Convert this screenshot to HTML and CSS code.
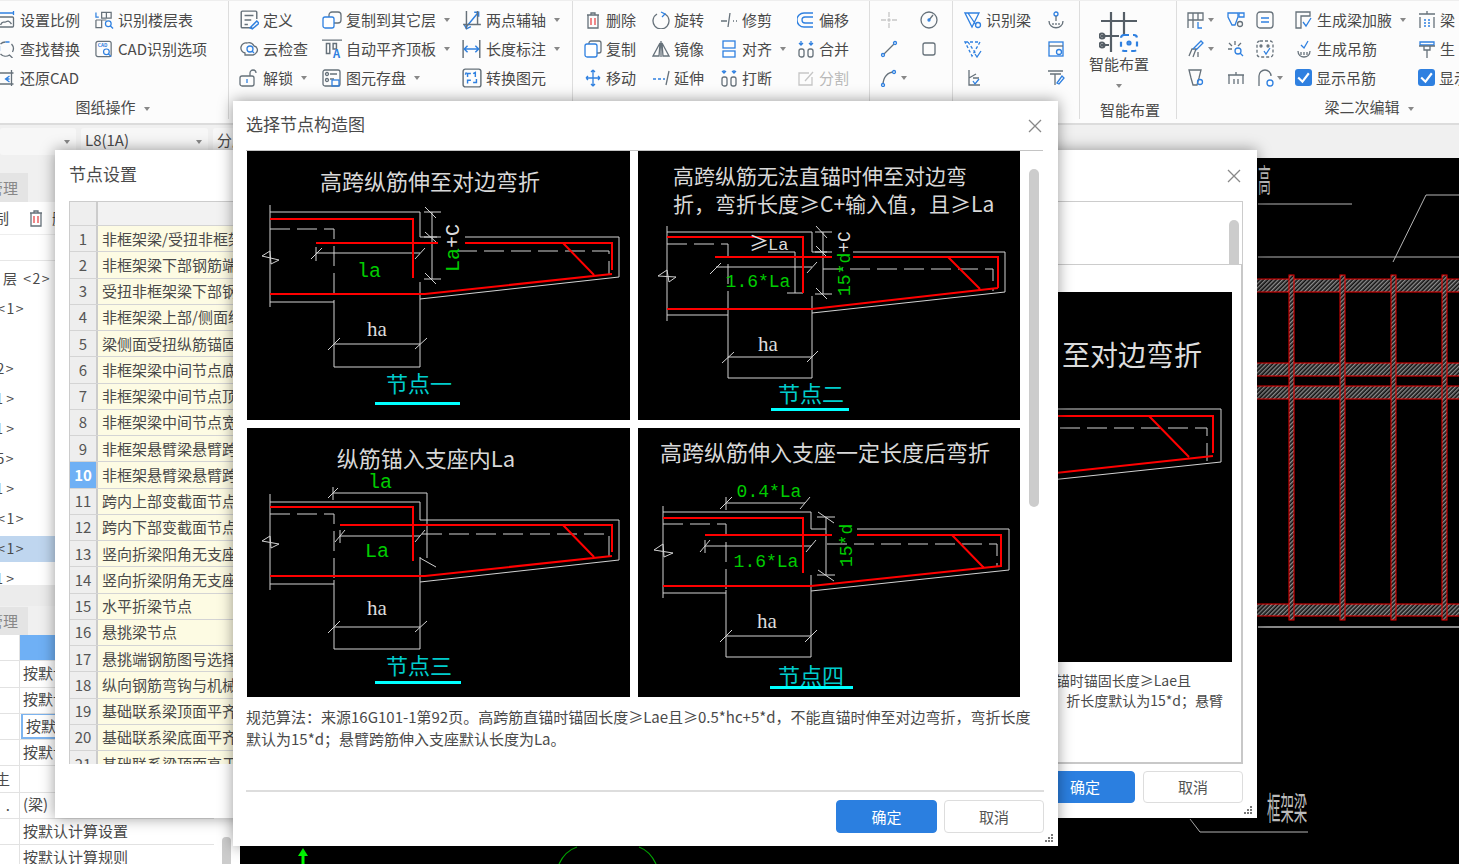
FILE: index.html
```html
<!DOCTYPE html>
<html lang="zh-CN">
<head>
  <meta charset="UTF-8">
  <title>选择节点构造图</title>
  <link rel="stylesheet" href="styles.css">
</head>
<body>
  <div class="ribbon">
    <div class="group g1">
      <div class="tools">
        <div class="tool"><svg class="ic" viewBox="0 0 18 18"><path class="b" d="M1 2h15M1 0v4M16 0v4"/><rect x="1" y="6" width="15" height="10" rx="1"/><path d="M3 14c2-5 3-2 5-3s3-2 6 2"/></svg><span>设置比例</span></div>
        <div class="tool"><svg class="ic" viewBox="0 0 18 18"><path d="M3 4a7 7 0 0 1 5-2M14 4a7 7 0 0 1 1 8M3 14a7 7 0 0 0 9 1l3 3"/><path class="b" d="M8 2h4M2 6v5"/></svg><span>查找替换</span></div>
        <div class="tool"><svg class="ic" viewBox="0 0 18 18"><path d="M0 4h16M0 15h16M14 1v16"/><path class="b" d="M12 7l-4 3 4 3M8 10h4"/></svg><span>还原CAD</span></div>
        <div class="tool"><svg class="ic" viewBox="0 0 20 18"><path class="b" d="M1 1v5h3"/><path d="M7 1h10v6H7zM12 1v6M1 9h11M1 9v8h6V9"/><circle class="b" cx="14" cy="13" r="3"/><path class="b" d="M16 15l3 3"/></svg><span>识别楼层表</span></div>
        <div class="tool"><svg class="ic" viewBox="0 0 20 18"><rect x="1" y="1" width="16" height="16" rx="2"/><text class="ic-text" x="3" y="7">CAD</text><circle class="b" cx="12" cy="12" r="3"/><path class="b" d="M14 14l3 3"/></svg><span>CAD识别选项</span></div>
      </div>
      <div class="group-label">图纸操作<i class="caret"></i></div>
    </div>

    <div class="group g2">
      <div class="tools">
        <div class="tool"><svg class="ic" viewBox="0 0 18 18"><path d="M12 16H3a1 1 0 0 1-1-1V2a1 1 0 0 1 1-1h12a1 1 0 0 1 1 1v6M5 5h8M5 9h6M5 13h3"/><path class="b" d="M10 16l6-6 2 2-6 5z"/></svg><span>定义</span></div>
        <div class="tool"><svg class="ic" viewBox="0 0 20 18"><rect x="7" y="1" width="12" height="11" rx="3"/><rect class="b blue-fill" x="1" y="6" width="11" height="11" rx="2"/></svg><span>复制到其它层</span><i class="caret"></i></div>
        <div class="tool"><svg class="ic" viewBox="0 0 18 18"><path class="b" d="M4 15L14 3M2 13l2 4 4-2M11 2l4 0 0 4"/><path d="M4 1v16M1 13h16M14 1v12"/></svg><span>两点辅轴</span><i class="caret"></i></div>
        <div class="tool"><svg class="ic" viewBox="0 0 20 18"><path d="M6 13a5 5 0 0 1 2-10 6 6 0 0 1 7 3 4 4 0 0 1 2 7 5 5 0 0 1-3 2H6z"/><circle class="b" cx="11" cy="9" r="3"/><path class="b" d="M13 11l2 2"/></svg><span>云检查</span></div>
        <div class="tool"><svg class="ic" viewBox="0 0 18 18"><path d="M0 1h18M4 4v9h3V4zM10 4v5h3V4z"/><text class="ic-letter" x="10" y="17">A</text></svg><span>自动平齐顶板</span><i class="caret"></i></div>
        <div class="tool"><svg class="ic" viewBox="0 0 18 18"><path d="M1 1v16M16 1v16"/><path class="b" d="M2 9h13M5 6L2 9l3 3M12 6l3 3-3 3"/></svg><span>长度标注</span><i class="caret"></i></div>
        <div class="tool"><svg class="ic" viewBox="0 0 20 18"><rect x="1" y="7" width="14" height="10" rx="2"/><path d="M11 7V4a3 3 0 0 1 6 0"/><path class="b" d="M8 10v4"/></svg><span>解锁</span><i class="caret"></i></div>
        <div class="tool"><svg class="ic" viewBox="0 0 20 18"><rect x="1" y="1" width="17" height="16" rx="2"/><circle cx="5" cy="5" r="1.5"/><circle cx="5" cy="11" r="1.5"/><path d="M8 5h7M8 10h4"/><rect class="b" x="10" y="11" width="7" height="6"/></svg><span>图元存盘</span><i class="caret"></i></div>
        <div class="tool"><svg class="ic" viewBox="0 0 18 18"><rect x="1" y="1" width="16" height="16" rx="2"/><path class="b" d="M5 8V5h3M4 4l-1 2M10 5l2-1v4M8 11H5v3M13 10v3h-3"/></svg><span>转换图元</span></div>
      </div>
    </div>

    <div class="group g3">
      <div class="tools">
        <div class="tool"><svg class="ic" viewBox="0 0 18 18"><path d="M3 4h12M7 4V2h4v2M4 4v13h10V4"/><path class="r" d="M7 7v7M11 7v7"/></svg><span>删除</span></div>
        <div class="tool"><svg class="ic" viewBox="0 0 18 18"><path d="M5 3A8 8 0 1 0 13 3"/><path class="b" d="M9 1l4 2-3 3"/></svg><span>旋转</span></div>
        <div class="tool"><svg class="ic" viewBox="0 0 18 18"><path d="M1 10h6M13 10h1M16 10h1M10 2L8 16"/></svg><span>修剪</span></div>
        <div class="tool"><svg class="ic" viewBox="0 0 18 18"><path class="b" d="M16 2H7a5 5 0 0 0 0 14h9M16 6H8a3 3 0 0 0 0 6h8"/></svg><span>偏移</span></div>
        <div class="tool"><svg class="ic" viewBox="0 0 18 18"><rect x="5" y="1" width="12" height="12" rx="2"/><rect class="b blue-fill" x="1" y="4" width="12" height="13" rx="2"/></svg><span>复制</span></div>
        <div class="tool"><svg class="ic" viewBox="0 0 18 18"><path d="M9 1v16M8 3L1 16h6zM10 3l7 13h-6z"/></svg><span>镜像</span></div>
        <div class="tool"><svg class="ic" viewBox="0 0 18 18"><rect class="b" x="3" y="1" width="12" height="7"/><rect class="b blue-fill" x="3" y="11" width="12" height="6"/></svg><span>对齐</span><i class="caret"></i></div>
        <div class="tool"><svg class="ic" viewBox="0 0 18 18"><path class="b" d="M4 1v4M2 3l2 2 2-2M14 1v4M12 3l2 2 2-2"/><rect x="2" y="9" width="5" height="8" rx="2"/><rect x="11" y="9" width="5" height="8" rx="2"/></svg><span>合并</span></div>
        <div class="tool"><svg class="ic" viewBox="0 0 18 18"><path class="b" d="M9 1v16M2 9h14M9 1L7 3M9 1l2 2M9 17l-2-2M9 17l2-2M2 9l2-2M2 9l2 2M16 9l-2-2M16 9l-2 2"/></svg><span>移动</span></div>
        <div class="tool"><svg class="ic" viewBox="0 0 18 18"><path class="b" d="M1 10h3M6 10h3M11 10h2"/><path d="M17 2l-3 14"/></svg><span>延伸</span></div>
        <div class="tool"><svg class="ic" viewBox="0 0 18 18"><path class="b" d="M4 1v3M2 2l2 2 2-2M14 1v3M12 2l2 2 2-2"/><rect x="2" y="8" width="5" height="9" rx="2"/><rect x="11" y="8" width="5" height="9" rx="2"/></svg><span>打断</span></div>
        <div class="tool off"><svg class="ic" viewBox="0 0 18 18"><path d="M12 4H2v12h13V8M8 12l8-9"/></svg><span>分割</span></div>
      </div>
    </div>

    <div class="group g4">
      <div class="tools">
        <div class="tool off"><svg class="ic" viewBox="0 0 18 18"><path d="M9 1v5M9 12v5M1 9h5M12 9h5"/><circle cx="9" cy="9" r="1"/></svg></div>
        <div class="tool"><svg class="ic" viewBox="0 0 18 18"><circle cx="9" cy="9" r="8"/><path d="M9 9l4-5"/><circle class="b" cx="9" cy="9" r="1"/></svg></div>
        <div class="tool"><svg class="ic" viewBox="0 0 18 18"><path d="M3 15L15 3"/><circle class="b blue-fill" cx="3" cy="15" r="1.5"/><circle class="b blue-fill" cx="15" cy="3" r="1.5"/></svg></div>
        <div class="tool"><svg class="ic" viewBox="0 0 18 18"><rect x="3" y="3" width="12" height="12" rx="2"/></svg></div>
        <div class="tool"><svg class="ic" viewBox="0 0 18 18"><path d="M3 16C3 8 8 3 14 3"/><circle class="b blue-fill" cx="3" cy="16" r="1.5"/><circle class="b blue-fill" cx="14" cy="3" r="1.5"/></svg><i class="caret tight"></i></div>
      </div>
    </div>

    <div class="group g5">
      <div class="tools">
        <div class="tool"><svg class="ic" viewBox="0 0 18 18"><path class="b" d="M1 2h14L8 16zM4 2l8 12"/><circle class="b" cx="14" cy="14" r="2.5"/></svg><span>识别梁</span></div>
        <div class="tool"><svg class="ic" viewBox="0 0 18 18"><rect class="b" x="7" y="1" width="4" height="4" rx="2"/><path d="M9 5v5M2 10c0 9 14 9 14 0M6 12v2M9 12v2M12 12v2"/></svg></div>
        <div class="tool"><svg class="ic" viewBox="0 0 18 18"><path class="b" stroke-dasharray="3 2" d="M1 2h15L8 16zM4 2l8 12"/><path class="b" d="M11 14l2 3 4-6"/></svg></div>
        <div class="tool"><svg class="ic" viewBox="0 0 18 18"><rect class="b" x="2" y="2" width="14" height="14"/><path d="M2 6h14"/><circle class="b" cx="12" cy="12" r="2.5"/></svg></div>
        <div class="tool"><svg class="ic" viewBox="0 0 18 18"><path d="M5 1v15h11M5 9l7-4M9 9h6"/><path class="b" d="M9 12l2 3 4-5"/></svg></div>
        <div class="tool"><svg class="ic" viewBox="0 0 18 18"><path d="M1 2h15M3 5h11M8 5v11"/><path class="b" d="M10 14l5-7 2 2-5 6z"/></svg></div>
      </div>
    </div>

    <div class="group g6">
      <svg class="ic-big" viewBox="0 0 40 42"><path d="M12 1v40M25 1v24M2 10h36M2 25h18M2 34h8"/><circle cx="3" cy="25" r="2.5"/><circle cx="3" cy="34" r="2.5"/><rect class="b" stroke-dasharray="5 4" x="22" y="24" width="16" height="16" rx="3"/><circle class="b blue-fill" cx="30" cy="32" r="1.5"/></svg>
      <span class="big-label">智能布置</span>
      <i class="caret big-caret"></i>
      <div class="group-label">智能布置</div>
    </div>

    <div class="group g7">
      <div class="tools">
        <div class="tool"><svg class="ic" viewBox="0 0 18 18"><path d="M1 2h15v7H1zM6 2v7M11 2v7M1 9v8M6 9v8"/><path class="b" d="M11 11v6h4"/></svg><i class="caret tight"></i></div>
        <div class="tool"><svg class="ic" viewBox="0 0 18 18"><path class="b" d="M1 2h10v4l-3 8H5L1 6z"/><path class="b" d="M12 2h5v4h-5z"/><circle cx="13" cy="13" r="2.5"/></svg></div>
        <div class="tool"><svg class="ic" viewBox="0 0 18 18"><rect x="1" y="1" width="16" height="16" rx="3"/><path class="b" d="M5 7h8M5 11h8"/></svg></div>
        <div class="tool"><svg class="ic" viewBox="0 0 18 18"><path d="M1 1h14v4H6v12H1z"/><path class="b" d="M8 11l3 4 5-8"/></svg><span>生成梁加腋</span><i class="caret"></i></div>
        <div class="tool"><svg class="ic" viewBox="0 0 18 18"><path d="M1 3h16M9 0v3M2 6v11M16 6v11"/><path class="b" stroke-dasharray="2 2" d="M6 9h8M6 12h8M6 15h8"/></svg><span>梁</span></div>
        <div class="tool"><svg class="ic" viewBox="0 0 18 18"><path d="M2 16l3-7h4l-3 8"/><path class="b" d="M6 9l8-8 2 2-7 7"/><path d="M11 12v5"/></svg><i class="caret tight"></i></div>
        <div class="tool"><svg class="ic" viewBox="0 0 18 18"><path d="M8 1v4M2 3l3 3M14 3l-3 3M1 9h4"/><circle class="b" cx="11" cy="11" r="3"/><path class="b" d="M13 13l3 3"/></svg></div>
        <div class="tool"><svg class="ic" viewBox="0 0 18 18"><rect x="1" y="1" width="16" height="16" rx="3" stroke-dasharray="3 2"/><path class="b" d="M8 11l2 3 4-6"/><circle cx="5" cy="6" r="1"/><circle cx="12" cy="6" r="1"/></svg></div>
        <div class="tool"><svg class="ic" viewBox="0 0 18 18"><path d="M3 11c0 8 12 8 12 0M6 12v3M9 12v3M12 12v3"/><path class="b" d="M6 5l3 3 4-7"/></svg><span>生成吊筋</span></div>
        <div class="tool"><svg class="ic" viewBox="0 0 18 18"><path class="b blue-fill" d="M2 2h14v3H2z"/><path d="M1 6h16M6 6v4h6V6M9 10v8"/></svg><span>生</span></div>
        <div class="tool"><svg class="ic" viewBox="0 0 18 18"><path d="M2 1h12l-2 8-2 7H6L4 9z"/><circle class="b" cx="13" cy="13" r="2.5"/></svg></div>
        <div class="tool"><svg class="ic" viewBox="0 0 18 18"><path d="M1 6h16M9 3v3M2 6v9M16 6v9M7 10v5M11 10v5"/></svg></div>
        <div class="tool"><svg class="ic" viewBox="0 0 18 18"><path d="M3 17V7a6 6 0 0 1 12 0"/><circle class="b blue-fill" cx="14" cy="14" r="3"/></svg><i class="caret tight"></i></div>
        <label class="tool"><i class="check"><svg viewBox="0 0 16 16"><path d="M3 8l4 4 6-8"/></svg></i><span>显示吊筋</span></label>
        <label class="tool"><i class="check"><svg viewBox="0 0 16 16"><path d="M3 8l4 4 6-8"/></svg></i><span>显示</span></label>
      </div>
      <div class="group-label">梁二次编辑<i class="caret"></i></div>
    </div>
  </div>

  <div class="strip">
    <div class="combo c-first"><i class="caret"></i></div>
    <div class="combo c-second"><span>L8(1A)</span><i class="caret"></i></div>
    <div class="combo c-third"><span>分层1</span></div>
  </div>

  <div class="workspace">
    <div class="side">
      <div class="side-tabs"><div class="side-tab">管理</div></div>
      <div class="side-tools">
        <span class="clip-text">复制</span>
        <svg class="ic" viewBox="0 0 18 18"><path d="M3 4h12M7 4V2h4v2M4 4v13h10V4"/><path class="r" d="M7 7v7M11 7v7"/></svg>
        <span>删除</span>
      </div>
      <div class="side-search"></div>
      <div class="tree">
        <div class="tree-row w51">层 &lt;2&gt;</div>
        <div class="tree-row w25">&lt;1&gt;</div>
        <div class="tree-row"></div>
        <div class="tree-row w15">2&gt;</div>
        <div class="tree-row w15 one">1 &gt;</div>
        <div class="tree-row w15 one">1 &gt;</div>
        <div class="tree-row w15">5&gt;</div>
        <div class="tree-row w15 one">1 &gt;</div>
        <div class="tree-row w25">&lt;1&gt;</div>
        <div class="tree-row w25 active">&lt;1&gt;</div>
        <div class="tree-row w15 one">1 &gt;</div>
      </div>
      <div class="side-bar"></div>
      <div class="side-tabs short"><div class="side-tab">管理</div></div>
      <div class="prop-wrap">
        <div class="props">
          <div class="prop-row"><div class="prop-key"></div><div class="prop-val head"></div></div>
          <div class="prop-row"><div class="prop-key"></div><div class="prop-val">按默认计算设置</div></div>
          <div class="prop-row"><div class="prop-key"></div><div class="prop-val">按默认计算规则</div></div>
          <div class="prop-row"><div class="prop-key"></div><div class="prop-val"><span class="prop-sel">按默认节点设置</span></div></div>
          <div class="prop-row"><div class="prop-key"></div><div class="prop-val">按默认搭接设置</div></div>
          <div class="prop-row"><div class="prop-key">生</div><div class="prop-val"></div></div>
          <div class="prop-row"><div class="prop-key">.</div><div class="prop-val">(梁)</div></div>
          <div class="prop-row"><div class="prop-key"></div><div class="prop-val">按默认计算设置</div></div>
          <div class="prop-row"><div class="prop-key"></div><div class="prop-val">按默认计算规则</div></div>
        </div>
        <div class="prop-scroll"><div class="prop-thumb"></div></div>
      </div>
    </div>

    <div class="canvas">
      <svg class="cad-full" viewBox="240 158 1219 706">
        <defs>
          <pattern id="hatch" width="3" height="3" patternUnits="userSpaceOnUse" patternTransform="rotate(45)">
            <rect width="3" height="3" fill="#111"/>
            <rect width="1.400" height="3" fill="#8c8c8c"/>
          </pattern>
        </defs>
        <text class="cad-thin" transform="translate(1258 192) scale(.4 1)">高</text>
        <path class="line-gray" d="M1258 204H1352M1258 257H1459M1393 262L1426 195H1459"/>
        <path class="line-thick" d="M1258 627H1459"/>
        <g class="hatch-bars">
          <rect x="1250" y="279" width="220" height="13"/>
          <rect x="1250" y="363" width="220" height="13"/>
          <rect x="1250" y="386" width="220" height="13"/>
          <rect x="1250" y="604" width="220" height="12"/>
          <rect x="1289" y="275" width="5" height="345"/>
          <rect x="1340" y="275" width="5" height="345"/>
          <rect x="1391" y="275" width="5" height="345"/>
          <rect x="1442" y="275" width="5" height="345"/>
        </g>
        <text class="cad-thin" transform="translate(1267 820) scale(.42 1)">框架梁</text>
        <path class="line-gray" d="M1190 819L1200 832H1308"/>
        <path class="arrow-green" d="M303 848l-5 8h3.500v8h3v-8h3.500z"/>
        <path class="arc-green" d="M559 864Q565 851 577 847M639 847Q650 851 656 864"/>
      </svg>
    </div>
  </div>

  <div class="dlg node-win">
    <div class="node-head">
      <span class="dlg-title">节点设置</span>
      <svg class="close" viewBox="0 0 14 14"><path d="M1 1l12 12M13 1L1 13"/></svg>
    </div>
    <div class="node-body">
      <div class="node-table">
        <div class="node-row node-th"><div class="node-num"></div><div class="node-name"></div></div>
        <div class="node-row"><div class="node-num">1</div><div class="node-name">非框架梁/受扭非框架梁纵筋配置</div></div>
        <div class="node-row"><div class="node-num">2</div><div class="node-name">非框架梁下部钢筋端部构造</div></div>
        <div class="node-row"><div class="node-num">3</div><div class="node-name">受扭非框架梁下部钢筋端部构造</div></div>
        <div class="node-row"><div class="node-num">4</div><div class="node-name">非框架梁上部/侧面纵筋构造</div></div>
        <div class="node-row"><div class="node-num">5</div><div class="node-name">梁侧面受扭纵筋锚固构造</div></div>
        <div class="node-row"><div class="node-num">6</div><div class="node-name">非框架梁中间节点底部构造</div></div>
        <div class="node-row"><div class="node-num">7</div><div class="node-name">非框架梁中间节点顶部构造</div></div>
        <div class="node-row"><div class="node-num">8</div><div class="node-name">非框架梁中间节点宽度变化</div></div>
        <div class="node-row"><div class="node-num">9</div><div class="node-name">非框架悬臂梁悬臂跨上部构造</div></div>
        <div class="node-row"><div class="node-num sel">10</div><div class="node-name">非框架悬臂梁悬臂跨下部构造</div></div>
        <div class="node-row"><div class="node-num">11</div><div class="node-name">跨内上部变截面节点构造</div></div>
        <div class="node-row"><div class="node-num">12</div><div class="node-name">跨内下部变截面节点构造</div></div>
        <div class="node-row"><div class="node-num">13</div><div class="node-name">竖向折梁阳角无支座节点</div></div>
        <div class="node-row"><div class="node-num">14</div><div class="node-name">竖向折梁阴角无支座节点</div></div>
        <div class="node-row"><div class="node-num">15</div><div class="node-name">水平折梁节点</div></div>
        <div class="node-row"><div class="node-num">16</div><div class="node-name">悬挑梁节点</div></div>
        <div class="node-row"><div class="node-num">17</div><div class="node-name">悬挑端钢筋图号选择构造</div></div>
        <div class="node-row"><div class="node-num">18</div><div class="node-name">纵向钢筋弯钩与机械锚固</div></div>
        <div class="node-row"><div class="node-num">19</div><div class="node-name">基础联系梁顶面平齐构造</div></div>
        <div class="node-row"><div class="node-num">20</div><div class="node-name">基础联系梁底面平齐构造</div></div>
        <div class="node-row"><div class="node-num">21</div><div class="node-name">基础联系梁顶面高于构造</div></div>
      </div>
      <div class="node-frame">
        <div class="frame-top"><div class="frame-thumb"></div></div>
        <div class="frame-panel">
          <svg class="cad-back" viewBox="851 291 380 370">
            <text class="cad-big" x="1201" y="365" text-anchor="end">至对边弯折</text>
            <path class="cad-wire" d="M851 408H1220V461L851 500"/>
            <path class="cad-wire dash" d="M1059 427H1206V460"/>
            <path class="cad-red" d="M851 415H1212V452M851 494L1212 455M1148 415L1188 456"/>
          </svg>
          <div class="back-desc"><span class="back-line short">直锚时锚固长度≥Lae且</span><span class="back-line">折长度默认为15*d；悬臂</span></div>
        </div>
      </div>
    </div>
    <div class="node-foot">
      <button class="btn primary">确定</button>
      <button class="btn">取消</button>
    </div>
    <svg class="grip" viewBox="0 0 10 10"><path d="M7 1h2v2H7zM4 4h2v2H4zM7 4h2v2H7zM1 7h2v2H1zM4 7h2v2H4zM7 7h2v2H7z"/></svg>
  </div>

  <div class="dlg main-dlg">
    <div class="dlg-head">
      <span class="dlg-title">选择节点构造图</span>
      <svg class="close" viewBox="0 0 14 14"><path d="M1 1l12 12M13 1L1 13"/></svg>
    </div>
    <div class="gallery-wrap">
      <div class="gallery">
        <svg class="cell" viewBox="247 151 383 269">
          <text class="cad-title" x="430" y="190" text-anchor="middle">高跨纵筋伸至对边弯折</text>
          <path class="cad-wire" d="M270 205V307M270 212H420V237H437M465 237H619V277L420 299M420 282V367H334V300M270 302H334M316 253H420M311 259L322 248M316 247V261M415 259L425 248M432 212V279M424 212H441M424 237H441M424 279H441M425 207L436 218M425 232L436 242M425 273L436 284M334 344H420M328 350L340 338M415 349L427 338M262 256L270 251L271 264L279 260Z"/>
          <path class="cad-wire dash" d="M270 229H334V300M457 251H609V274"/>
          <path class="cad-red" d="M270 219H413V278M316 243H438M465 243H612V270M270 294H425L612 274M563 243L594 275"/>
          <text class="cad-green" x="369" y="277" text-anchor="middle">la</text>
          <text class="cad-rot" transform="translate(459 272) rotate(-90)"><tspan class="green">La</tspan>+C</text>
          <text class="cad-ha" x="377" y="336" text-anchor="middle">ha</text>
          <text class="cad-node" x="419" y="392" text-anchor="middle">节点一</text>
          <rect class="cyan-bar" x="375" y="402" width="85" height="3"/>
        </svg>
        <svg class="cell" viewBox="638 151 382 269">
          <text class="cad-title t2" x="673" y="184">高跨纵筋无法直锚时伸至对边弯</text>
          <text class="cad-title t2" x="673" y="212">折，弯折长度≥C+输入值，且≥La</text>
          <path class="cad-wire" d="M667 226V321M667 232H812V252H827M853 252H1005V292L812 313M812 296V378H728V305M667 315H728M716 267H812M710 274L721 263M807 273L817 262M768 252H795V293M787 293H803M823 232V294M815 232H832M815 252H832M815 294H832M816 226L827 238M816 246L827 257M816 288L827 299M728 357H812M722 363L734 352M807 362L818 351M658 276L667 270L669 282L676 277Z"/>
          <path class="cad-wire dash" d="M667 244H728V305M823 269H993V291"/>
          <path class="cad-red" d="M667 237H803V293M715 257H832M853 257H998V288M667 309H812L998 288M948 257L980 289"/>
          <text class="cad-green fs19" x="758" y="287" text-anchor="middle">1.6*La</text>
          <text class="cad-ge" x="749" y="251">≥</text>
          <text class="cad-white-sm" x="768" y="250">La</text>
          <text class="cad-rot fs18" transform="translate(850 296) rotate(-90)"><tspan class="green">15*d</tspan>+C</text>
          <text class="cad-ha" x="768" y="351" text-anchor="middle">ha</text>
          <text class="cad-node" x="811" y="402" text-anchor="middle">节点二</text>
          <rect class="cyan-bar" x="771" y="408" width="78" height="3"/>
        </svg>
        <svg class="cell" viewBox="247 428 383 269">
          <text class="cad-title" x="426" y="467" text-anchor="middle">纵筋锚入支座内La</text>
          <path class="cad-wire" d="M270 494V590M270 502H420V520H619V560L420 582M333 493H427V558M420 558L436 567M328 498L338 488M333 487V500M420 557V649H334V580M270 584H334M340 536H420M335 542L345 530M340 530V543M415 542L425 530M334 627H420M328 633L340 621M415 632L427 621M262 541L270 536L271 548L279 544Z"/>
          <path class="cad-wire dash" d="M270 514H334V580M422 534H609V556"/>
          <path class="cad-red" d="M270 507H413V561M340 525H612V552M270 576H425L612 556M563 525L594 557"/>
          <text class="cad-green" x="380" y="488" text-anchor="middle">la</text>
          <text class="cad-green" x="377" y="557" text-anchor="middle">La</text>
          <text class="cad-ha" x="377" y="615" text-anchor="middle">ha</text>
          <text class="cad-node" x="419" y="674" text-anchor="middle">节点三</text>
          <rect class="cyan-bar" x="375" y="681" width="86" height="3"/>
        </svg>
        <svg class="cell" viewBox="638 428 382 269">
          <text class="cad-title" x="825" y="461" text-anchor="middle">高跨纵筋伸入支座一定长度后弯折</text>
          <path class="cad-wire" d="M663 506V598M663 512H811V529H826M857 529H1009V570L811 591M811 575V657H726V590M663 593H726M705 546H811M700 552L710 540M705 540V553M806 552L816 540M726 503H805M720 509L732 497M726 497V510M800 509L810 497M826 517V575M817 517H835M817 575H835M818 512L834 523M818 570L834 581M726 636H811M720 642L732 630M805 642L817 630M654 550L663 544L664 557L673 553Z"/>
          <path class="cad-wire dash" d="M663 524H726V590M827 544H997V567"/>
          <path class="cad-red" d="M663 518H803V573M705 535H832M857 535H1001V567M663 586H811L1001 566M952 535L984 568"/>
          <text class="cad-green fs19" x="769" y="497" text-anchor="middle">0.4*La</text>
          <text class="cad-green fs19" x="766" y="567" text-anchor="middle">1.6*La</text>
          <text class="cad-rot fs18" transform="translate(852 567) rotate(-90)"><tspan class="green">15*d</tspan></text>
          <text class="cad-ha" x="767" y="628" text-anchor="middle">ha</text>
          <text class="cad-node" x="811" y="684" text-anchor="middle">节点四</text>
          <rect class="cyan-bar" x="770" y="686" width="83" height="3"/>
        </svg>
      </div>
      <div class="scroll"><div class="scroll-thumb"></div></div>
    </div>
    <div class="desc">规范算法：来源16G101-1第92页。高跨筋直锚时锚固长度≥Lae且≥0.5*hc+5*d，不能直锚时伸至对边弯折，弯折长度<br>默认为15*d；悬臂跨筋伸入支座默认长度为La。</div>
    <div class="dlg-foot">
      <button class="btn primary wide">确定</button>
      <button class="btn">取消</button>
    </div>
    <svg class="grip" viewBox="0 0 10 10"><path d="M7 1h2v2H7zM4 4h2v2H4zM7 4h2v2H7zM1 7h2v2H1zM4 7h2v2H4zM7 7h2v2H7z"/></svg>
  </div>
</body>
</html>
```

FILE: styles.css
```css
html, body {
  margin: 0;
  height: 100%;
}
body {
  position: relative;
  width: 1459px;
  height: 864px;
  overflow: hidden;
  display: flex;
  flex-direction: column;
  background: #000;
  color: #4a4a4a;
  font-family: "Noto Sans CJK SC", "Liberation Sans", sans-serif;
  font-size: 15px;
  line-height: 1.2;
}

/* ribbon */
.ribbon {
  display: flex;
  flex: none;
  height: 125px;
  box-sizing: border-box;
  background: #fcfcfc;
  border-top: 1px solid #eee;
  border-bottom: 2px solid #dcdcdc;
  overflow: hidden;
}
.group {
  flex: none;
  box-sizing: border-box;
  height: 118px;
  padding-top: 4px;
  border-right: 1px solid #ddd;
  display: flex;
  flex-direction: column;
}
.tools {
  display: grid;
  grid-template-rows: repeat(3, 29px);
}
.tool {
  display: flex;
  align-items: center;
  gap: 4px;
  white-space: nowrap;
}
.tool.off {
  color: #b8b8b8;
}
.tool.off .ic path,
.tool.off .ic circle {
  stroke: #c6c6c6;
}
.ic {
  flex: none;
  width: 18px;
  height: 18px;
  fill: none;
  stroke: #66717a;
  stroke-width: 1.3;
}
.ic .b, .ic-big .b {
  stroke: #2f80e0;
}
.ic .r {
  stroke: #e8494a;
}
.ic .blue-fill, .ic-big .blue-fill {
  fill: #fff;
}
.ic-text {
  font-size: 5px;
  font-weight: 700;
  fill: #2f80e0;
  stroke: none;
}
.ic-letter {
  font-size: 10px;
  font-weight: 700;
  fill: #2f80e0;
  stroke: none;
}
.caret {
  display: inline-block;
  flex: none;
  width: 0;
  height: 0;
  margin-left: 4px;
  border-left: 3.5px solid transparent;
  border-right: 3.5px solid transparent;
  border-top: 4px solid #888;
}
.caret.tight {
  margin-left: -1px;
}
.group-label {
  margin-top: auto;
  padding-bottom: 3px;
  text-align: center;
  white-space: nowrap;
}
.group-label .caret {
  margin-left: 8px;
  vertical-align: 2px;
}

.g1 {
  width: 260px;
  margin-left: -31px;
  padding-left: 28px;
}
.g1 .ic {
  width: 19px;
}
.g1 .tools {
  grid-template-columns: 98px 1fr;
  grid-auto-flow: column;
}
.g2 {
  width: 344px;
  padding-left: 10px;
}
.g2 .ic {
  width: 20px;
  height: 20px;
}
.g2 .tools {
  grid-template-columns: 83px 140px 1fr;
}
.g3 {
  width: 297px;
  padding-left: 11px;
}
.g3 .tools {
  grid-template-columns: 68px 68px 77px 1fr;
}
.g4 {
  width: 83px;
  padding-left: 10px;
}
.g4 .tools {
  grid-template-columns: 40px 1fr;
}
.g5 {
  width: 127px;
  padding-left: 11px;
}
.g5 .tools {
  grid-template-columns: 83px 1fr;
}
.g6 {
  width: 97px;
  align-items: center;
}
.ic-big {
  flex: none;
  width: 40px;
  height: 42px;
  margin: 6px 18px 0 0;
  fill: none;
  stroke: #555e66;
  stroke-width: 2.200;
}
.big-label {
  margin: 2px 18px 0 0;
}
.big-caret {
  margin: 11px 18px 0 0;
}
.g6 .group-label {
  padding-bottom: 0;
  margin-right: -4px;
}
.g7 {
  width: 374px;
  padding-left: 10px;
  border-right: 0;
}
.g7 .tools {
  grid-template-columns: 40px 29px 39px 123px 1fr;
}
.check {
  flex: none;
  width: 17px;
  height: 17px;
  border-radius: 3px;
  background: #2f80e0;
}
.check svg {
  display: block;
  fill: none;
  stroke: #fff;
  stroke-width: 2;
}

/* combo strip */
.strip {
  flex: none;
  height: 33px;
  box-sizing: border-box;
  padding: 3px 0;
  display: flex;
  gap: 5px;
  background: #f0f0f0;
}
.combo {
  display: flex;
  align-items: center;
  justify-content: flex-end;
  padding-right: 6px;
  background: #f7f7f7;
  border-radius: 3px;
  overflow: hidden;
  white-space: nowrap;
}
.combo span {
  padding-bottom: 3px;
}
.c-first {
  width: 70px;
}
.c-second {
  width: 117px;
  justify-content: space-between;
  padding-left: 4px;
}
.c-third {
  width: 60px;
  justify-content: flex-start;
  padding-left: 4px;
}

/* main row */
.workspace {
  flex: 1;
  display: flex;
  min-height: 0;
}
.side {
  flex: none;
  width: 240px;
  display: flex;
  flex-direction: column;
  background: #fff;
  overflow: hidden;
}
.side-tabs {
  height: 44px;
  box-sizing: border-box;
  padding-top: 15px;
  background: #f0f0f0;
  flex: none;
}
.side-tabs.short {
  height: 29px;
  padding-top: 1px;
}
.side-tab {
  box-sizing: border-box;
  width: 28px;
  height: 100%;
  display: flex;
  align-items: center;
  justify-content: flex-end;
  padding-right: 10px;
  background: #e4e4e4;
  color: #888;
  overflow: hidden;
  white-space: nowrap;
}
.side-tools {
  flex: none;
  height: 33px;
  display: flex;
  align-items: center;
  gap: 7px;
  border-bottom: 1px solid #eee;
  box-sizing: border-box;
}
.clip-text {
  margin-left: -21px;
  padding-right: 11px;
}
.side-search {
  flex: none;
  height: 25px;
  border-bottom: 1px solid #e6e6e6;
  margin-bottom: 3px;
}
.tree {
  flex: none;
  height: 321px;
  overflow: hidden;
}
.tree-row {
  display: flex;
  align-items: center;
  justify-content: flex-end;
  box-sizing: border-box;
  height: 30px;
  padding-bottom: 1px;
  white-space: nowrap;
  font-size: 14px;
  letter-spacing: 1.500px;
}
.tree-row.w51 { padding-right: 189px; }
.tree-row.w25 { padding-right: 215px; }
.tree-row.w15 { padding-right: 225px; }
.tree-row.one {
  letter-spacing: 0;
  padding-right: 226px;
}
.tree-row.active {
  background: #bfd6ef;
  height: 26px;
  margin: 2px 0;
}
.side-bar {
  flex: none;
  height: 21px;
  background: #ececec;
}
.prop-wrap {
  display: flex;
  flex: none;
}
.props {
  flex: none;
  width: 214px;
}
.prop-row {
  display: flex;
  height: 26.3px;
  box-sizing: border-box;
  border-bottom: 1px solid #e2e2e2;
}
.prop-key {
  flex: none;
  box-sizing: border-box;
  width: 20px;
  padding-right: 9px;
  display: flex;
  align-items: center;
  justify-content: flex-end;
  border-right: 1px solid #e2e2e2;
  overflow: hidden;
  white-space: nowrap;
}
.prop-val {
  flex: 1;
  display: flex;
  align-items: center;
  padding: 0 0 2px 3px;
  white-space: nowrap;
  overflow: hidden;
}
.prop-val.head {
  background: #6fb0f5;
}
.prop-sel {
  outline: 2px solid #7db4ef;
  padding: 2px 60px 2px 3px;
}
.prop-scroll {
  flex: 1;
}
.prop-thumb {
  width: 9px;
  height: 40px;
  margin: 202px 0 0 8px;
  border-radius: 4px;
  background: #ccc;
}

.canvas {
  flex: 1;
  min-width: 0;
  background: #000;
}
.cad-full {
  display: block;
  width: 1219px;
  height: 706px;
}
.cad-thin {
  font-size: 32px;
  fill: #bbb;
}
.line-gray {
  fill: none;
  stroke: #b5b5b5;
}
.line-thick {
  fill: none;
  stroke: #888;
  stroke-width: 2;
}
.hatch-bars rect {
  fill: url(#hatch);
  stroke: #e00;
  stroke-width: 1;
}
.arrow-green {
  fill: #0f0;
}
.arc-green {
  fill: none;
  stroke: #0a0;
  stroke-width: 1.200;
}

/* dialogs */
.dlg {
  position: absolute;
  background: #fff;
  box-shadow: 0 0 14px rgba(0,0,0,0.4);
  display: flex;
  flex-direction: column;
}
.dlg-title {
  font-size: 17px;
  padding-bottom: 2px;
}
.close {
  width: 14px;
  height: 14px;
  fill: none;
  stroke: #888;
  stroke-width: 1.300;
}
.grip {
  position: absolute;
  right: 4px;
  bottom: 3px;
  width: 10px;
  height: 10px;
  fill: #777;
}
.btn {
  box-sizing: border-box;
  width: 100px;
  height: 33px;
  background: #fff;
  border: 1px solid #ddd;
  border-radius: 4px;
  color: #555;
  font: inherit;
}
.btn.primary {
  background: #2b7fe0;
  border-color: #2b7fe0;
  color: #fff;
}
.btn.wide {
  width: 101px;
}

.node-win {
  left: 55px;
  top: 150px;
  width: 1202px;
  height: 668px;
  box-sizing: border-box;
  padding: 0 14px;
}
.node-head {
  flex: none;
  height: 51px;
  display: flex;
  align-items: center;
  justify-content: space-between;
}
.node-head .close {
  margin-right: 2px;
}
.node-body {
  flex: none;
  height: 563px;
  display: flex;
  gap: 10px;
}
.node-table {
  flex: none;
  width: 600px;
  overflow: hidden;
  border: 1px solid #ccc;
  border-bottom: 0;
  box-sizing: border-box;
}
.node-row {
  display: flex;
  height: 26.25px;
  box-sizing: border-box;
  border-bottom: 1px solid #d4d4d4;
}
.node-th {
  height: 24px;
}
.node-num {
  flex: none;
  width: 26px;
  display: flex;
  align-items: center;
  justify-content: center;
  background: #eee;
  border-right: 2px solid #ccc;
  color: #555;
}
.node-num.sel {
  background: #6fb0f5;
  color: #fff;
  font-weight: 700;
}
.node-th .node-name {
  background: #f2f2f2;
}
.node-name {
  flex: 1;
  display: flex;
  align-items: center;
  padding-left: 4px;
  background: #fdfbe3;
  white-space: nowrap;
}
.node-frame {
  flex: 1;
  min-width: 0;
  display: flex;
  flex-direction: column;
  box-sizing: border-box;
  border: 1px solid #ccc;
  border-bottom: 0;
}
.frame-top {
  flex: none;
  height: 62px;
  position: relative;
  display: flex;
  justify-content: flex-end;
}
.frame-thumb {
  width: 10px;
  height: 44px;
  margin: 18px 3px 0 0;
  border-radius: 5px 5px 0 0;
  background: #ccc;
}
.frame-panel {
  flex: 1;
  display: flex;
  flex-direction: column;
  align-items: flex-end;
  padding: 27px 9px 0 0;
  border-top: 1px solid #ccc;
  border-right: 2px solid #c8c8c8;
  border-bottom: 2px solid #c8c8c8;
  margin-right: -1px;
}
.cad-back {
  flex: none;
  width: 380px;
  height: 370px;
  background: #000;
}
.back-desc {
  margin: 8px 9px 0 0;
  font-size: 14px;
  line-height: 20px;
  text-align: right;
  white-space: nowrap;
}
.back-line {
  display: block;
}
.back-line.short {
  padding-right: 32px;
}
.node-foot {
  flex: none;
  display: flex;
  justify-content: flex-end;
  gap: 8px;
  padding-top: 7px;
}
.node-foot .btn {
  height: 32px;
}

.main-dlg {
  left: 233px;
  top: 101px;
  width: 825px;
  height: 745px;
}
.dlg-head {
  flex: none;
  height: 49px;
  margin: 0 15px 0 13px;
  display: flex;
  align-items: center;
  justify-content: space-between;
  border-bottom: 1px solid #c4c4c4;
}
.dlg-head .close {
  margin-right: 1px;
}
.gallery-wrap {
  flex: none;
  display: flex;
  margin-left: 14px;
}
.gallery {
  flex: none;
  display: grid;
  grid-template-columns: 383px 382px;
  grid-template-rows: 269px 269px;
  gap: 8px;
}
.cell {
  display: block;
  width: 100%;
  height: 100%;
  background: #000;
}
.scroll {
  flex: none;
  margin-left: 9px;
}
.scroll-thumb {
  width: 10px;
  height: 338px;
  margin-top: 18px;
  border-radius: 5px;
  background: #ccc;
}
.desc {
  flex: none;
  padding: 9px 0 0 13px;
  line-height: 22px;
  white-space: nowrap;
}
.dlg-foot {
  margin: auto 14px 13px 13px;
  padding-top: 8px;
  border-top: 2px solid #ddd;
  display: flex;
  justify-content: flex-end;
  gap: 7px;
}

/* cad drawing */
.cad-wire {
  fill: none;
  stroke: #d2d2d2;
  stroke-width: 1;
}
.cad-wire.dash {
  stroke-dasharray: 20 7;
}
.cad-red {
  fill: none;
  stroke: #f00;
  stroke-width: 2;
}
.cad-title {
  font-size: 22px;
  fill: #d8d8d8;
}
.cad-title.t2 {
  font-size: 21px;
}
.cad-big {
  font-size: 28px;
  fill: #ddd;
}
.cad-green {
  font-family: "Liberation Mono", monospace;
  font-size: 20px;
  fill: #0c0;
}
.cad-green.fs19 {
  font-size: 18px;
}
.cad-rot {
  font-family: "Liberation Mono", monospace;
  font-size: 20px;
  fill: #ddd;
}
.cad-rot.fs18 {
  font-size: 18px;
}
.green {
  fill: #0c0;
}
.cad-ha {
  font-family: "Liberation Serif", serif;
  font-size: 21px;
  fill: #ddd;
}
.cad-white-sm {
  font-family: "Liberation Mono", monospace;
  font-size: 17px;
  fill: #ddd;
}
.cad-ge {
  font-size: 20px;
  fill: #ddd;
}
.cad-node {
  font-size: 22px;
  fill: #0cc;
}
.cyan-bar {
  fill: #0ff;
}
```
